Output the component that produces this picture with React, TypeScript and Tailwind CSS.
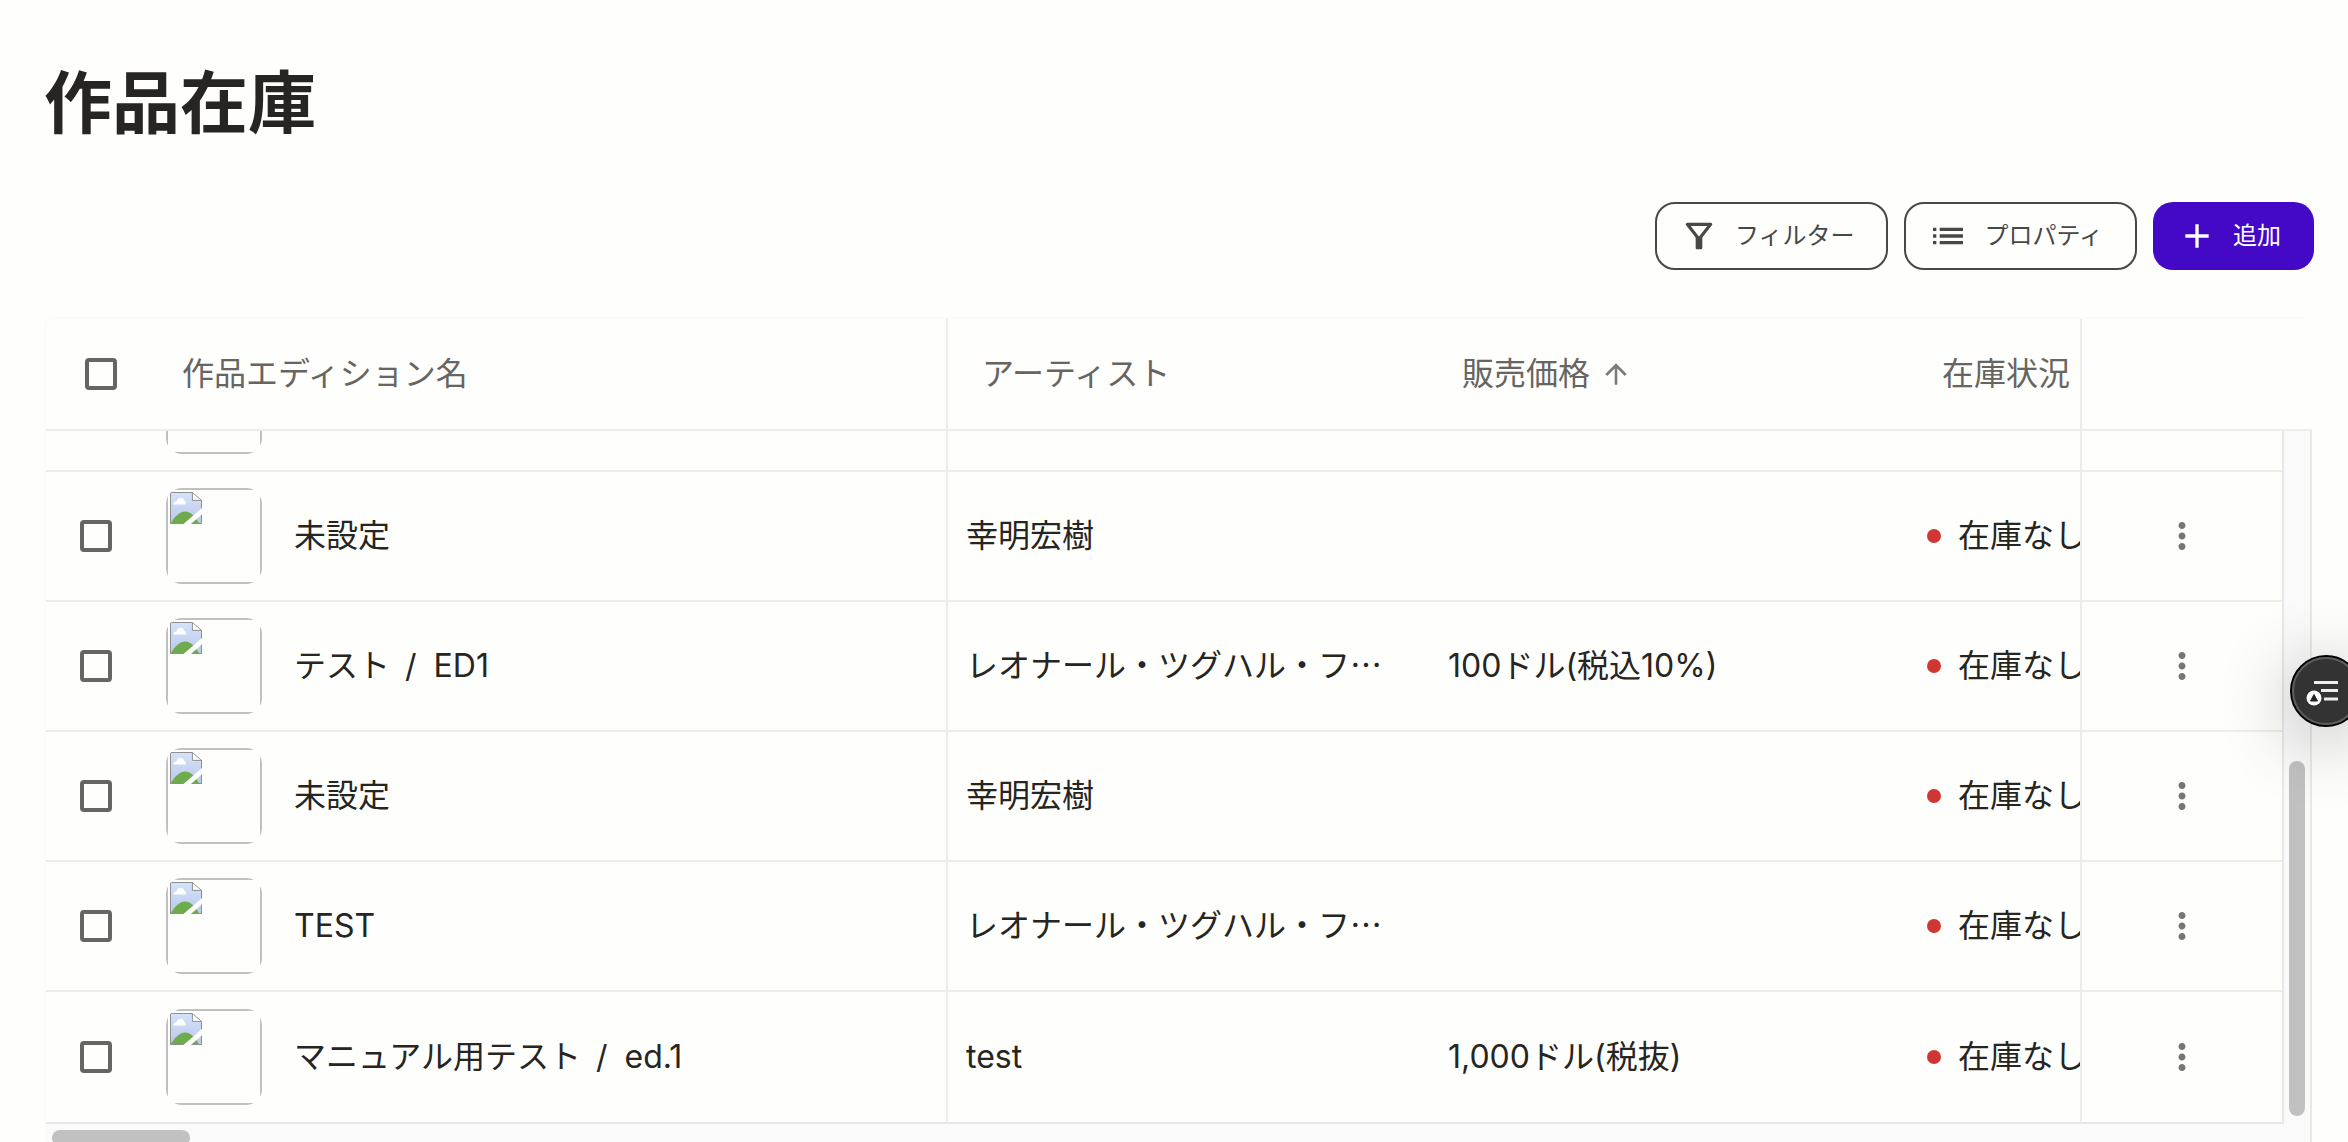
import { useState } from "react";
import {
    MdAdd,
    MdArrowUpward,
    MdList,
    MdMoreVert,
    MdOutlineFilterAlt,
} from "react-icons/md";

type Work = {
    id: number;
    title: string;
    edition?: string;
    artist: string;
    price?: string;
};

const works: Work[] = [
    { id: 1, title: "未設定", artist: "幸明宏樹" },
    { id: 2, title: "テスト", edition: "ED1", artist: "レオナール・ツグハル・フ…", price: "100ドル(税込10%)" },
    { id: 3, title: "未設定", artist: "幸明宏樹" },
    { id: 4, title: "TEST", artist: "レオナール・ツグハル・フ…" },
    { id: 5, title: "マニュアル用テスト", edition: "ed.1", artist: "test", price: "1,000ドル(税抜)" },
];

const line = "border-[#eeeee8]";

function Checkbox({ label, checked, onChange }: { label: string; checked: boolean; onChange: () => void }) {
    return (
        <input
            type="checkbox"
            aria-label={label}
            checked={checked}
            onChange={onChange}
            className="block size-8 appearance-none rounded-[4px] border-4 border-[#666562] checked:bg-[#666562]"
        />
    );
}

function BrokenImage() {
    return (
        <svg width="32" height="32" viewBox="0 0 16 16" aria-hidden="true">
            <defs>
                <linearGradient id="sky" x1="0" y1="0" x2="0" y2="1">
                    <stop offset="0" stopColor="#d6e3fb" />
                    <stop offset="1" stopColor="#b9c8ea" />
                </linearGradient>
                <clipPath id="page">
                    <path d="M0 0H11.2L16 4.2V16H0Z" />
                </clipPath>
            </defs>
            <g clipPath="url(#page)">
                <rect width="16" height="16" fill="url(#sky)" />
                <path d="M1.8 6.2C1.6 5.2 2.4 4.7 3.2 4.8C3.5 3.4 4.4 2.9 5.3 2.9C6.4 2.9 7 3.6 7.1 4.4C7.8 4.7 8.1 5.4 7.9 6.2Z" fill="#fff" />
                <path d="M0.3 15.7C2.6 12 5 9.8 7.6 9.8C10.4 9.8 12.6 12.4 14.6 15.7Z" fill="#6eab4c" />
                <path d="M0.25 0.25H11.2L15.75 4.2V15.75H0.25Z" fill="none" stroke="#8e8e8e" strokeWidth="0.5" />
                <path d="M11.2 0.2V4.2H15.8Z" fill="#fdfdfc" stroke="#8e8e8e" strokeWidth="0.5" />
                <path d="M6.5 16.2L16.2 7.8V11L10.2 16.2Z" fill="#fefefc" />
            </g>
        </svg>
    );
}

function Thumbnail() {
    return (
        <div className="size-24 shrink-0 overflow-hidden rounded-2xl">
            <div className="size-full border-2 border-[#c0c0c0] p-[2px]">
                <BrokenImage />
            </div>
        </div>
    );
}

function WorkRow({ work, checked, onToggle }: { work: Work; checked: boolean; onToggle: () => void }) {
    return (
        <tr className="h-[130px] last:h-[132px] last:[&>td]:border-b-[#e6e6e6]">
            <td className={`border-b-2 ${line}`}>
                <div className="flex justify-center">
                    <Checkbox label={`${work.title}を選択`} checked={checked} onChange={onToggle} />
                </div>
            </td>
            <td className={`border-r-2 border-b-2 pl-5 ${line}`}>
                <div className="flex items-center gap-8">
                    <Thumbnail />
                    <span>
                        {work.title}
                        {work.edition && (
                            <>
                                <span className="mr-2 ml-[6px]"> / </span>
                                {work.edition}
                            </>
                        )}
                    </span>
                </div>
            </td>
            <td className={`truncate border-b-2 pl-[18px] ${line}`}>
                {/* the ellipsis sits mid-height in the Japanese face */}
                <span
                    className={
                        work.artist.endsWith("…")
                            ? "font-['Noto_Sans_CJK_JP',sans-serif] leading-none"
                            : undefined
                    }
                >
                    {work.artist}
                </span>
            </td>
            <td className={`border-b-2 pl-[22px] ${line}`}>{work.price}</td>
            <td className={`overflow-hidden border-r-2 border-b-2 pl-[21px] whitespace-nowrap ${line}`}>
                <span className="mr-[17px] inline-block size-[14px] rounded-full bg-[#d03633] align-[4px]" />
                在庫なし
            </td>
            <td className={`border-b-2 ${line}`}>
                <button type="button" aria-label="メニュー" className="mx-auto block text-[#757575]">
                    <MdMoreVert size={42} />
                </button>
            </td>
        </tr>
    );
}

export default function App() {
    const [selected, setSelected] = useState<number[]>([]);

    const toggle = (id: number) =>
        setSelected((prev) => (prev.includes(id) ? prev.filter((n) => n !== id) : [...prev, id]));

    const allSelected = selected.length === works.length;
    const toggleAll = () => setSelected(allSelected ? [] : works.map((w) => w.id));

    return (
        <div className="relative h-screen overflow-hidden bg-[#fefefd] pt-12 font-[Inter,'Noto_Sans_CJK_JP',sans-serif] text-[32px] leading-[48px] text-[#262521]">
            <h1 className="pl-11 font-['Noto_Sans_CJK_JP',sans-serif] text-[68px] leading-[102px] font-bold">作品在庫</h1>

            {/* Toolbar */}
            <div className="mt-[52px] flex justify-end gap-4 pr-[34px] text-2xl text-[#484846]">
                <button type="button" className="flex h-[68px] items-center gap-4 rounded-[20px] border-2 border-[#484846] pr-8 pl-[22px]">
                    <MdOutlineFilterAlt size={40} />
                    フィルター
                </button>
                <button type="button" className="flex h-[68px] items-center gap-4 rounded-[20px] border-2 border-[#484846] pr-8 pl-[22px]">
                    <MdList size={40} />
                    プロパティ
                </button>
                <button type="button" className="flex h-[68px] items-center gap-4 rounded-[20px] bg-[#4409c6] pr-[33px] pl-6 text-white">
                    <MdAdd size={40} />
                    追加
                </button>
            </div>

            {/* Grid */}
            <div className="mt-[47px] mr-9 ml-11 rounded-t-lg border-t-2 border-l-2 border-[#fcfcfb]">
                <div className="flex">
                    <table className="w-full min-w-0 flex-1 table-fixed border-separate border-spacing-0 text-left">
                        <colgroup>
                            <col className="w-[100px]" />
                            <col />
                            <col className="w-[478px]" />
                            <col className="w-[480px]" />
                            <col className="w-[176px]" />
                            <col className="w-[200px]" />
                        </colgroup>
                        <thead className="text-[#666562]">
                            <tr className="h-[112px]">
                                <th className={`border-b-2 ${line}`}>
                                    <div className="flex justify-center pl-[10px]">
                                        <Checkbox label="すべて選択" checked={allSelected} onChange={toggleAll} />
                                    </div>
                                </th>
                                <th className={`border-r-2 border-b-2 pl-9 font-normal ${line}`}>作品エディション名</th>
                                <th className={`border-b-2 pl-[34px] font-normal ${line}`}>アーティスト</th>
                                <th className={`border-b-2 pl-9 font-normal ${line}`}>
                                    <div className="flex items-center gap-[10px]">
                                        販売価格
                                        <MdArrowUpward size={32} className="text-[#7c7c7a]" />
                                    </div>
                                </th>
                                <th className={`overflow-hidden border-r-2 border-b-2 pl-9 font-normal whitespace-nowrap ${line}`}>
                                    在庫状況
                                </th>
                                <td className={`border-b-2 ${line}`} />
                            </tr>
                        </thead>
                        <tbody>
                            {/* Row scrolled mostly under the header */}
                            <tr className="h-[41px]">
                                <td className={`border-b-2 ${line}`} />
                                <td className={`border-r-2 border-b-2 pl-5 ${line}`}>
                                    <div className="flex h-[39px] items-end overflow-hidden pb-4">
                                        <Thumbnail />
                                    </div>
                                </td>
                                <td className={`border-b-2 ${line}`} />
                                <td className={`border-b-2 ${line}`} />
                                <td className={`border-r-2 border-b-2 ${line}`} />
                                <td className={`border-b-2 ${line}`} />
                            </tr>
                            {works.map((work) => (
                                <WorkRow
                                    key={work.id}
                                    work={work}
                                    checked={selected.includes(work.id)}
                                    onToggle={() => toggle(work.id)}
                                />
                            ))}
                        </tbody>
                    </table>

                    {/* Vertical scrollbar */}
                    <div className="flex w-[30px] flex-col">
                        <div className={`h-[112px] border-b-2 ${line}`} />
                        <div className="flex flex-1 flex-col items-center justify-end border-x-2 border-[#e8e8e8] bg-[#fafafa] pb-[8px]">
                            <div className="h-[355px] w-4 rounded-full bg-[#c1c1c1]" />
                        </div>
                    </div>
                </div>

                {/* Horizontal scrollbar */}
                <div className="h-[30px] border-r-2 border-[#e8e8e8] bg-[#fafafa] px-[6px] pt-[6px]">
                    <div className="h-4 w-[138px] rounded-full bg-[#c1c1c1]" />
                </div>
            </div>

            {/* Floating launcher, half off the right edge */}
            <button
                type="button"
                aria-label="ガイド"
                className="absolute top-[655px] -right-[14px] size-[72px] rounded-full border-2 border-black bg-[#333] shadow-[0_12px_72px_rgba(0,0,0,0.3)]"
            >
                <svg width="68" height="68" viewBox="0 0 68 68" aria-hidden="true">
                    <circle cx="34" cy="34" r="33" fill="none" stroke="#5e5e5e" strokeWidth="2" />
                    <path d="M22 25.5H46M29 33.5H46M32 42H46" stroke="#eee" strokeWidth="3" />
                    <circle cx="22" cy="41" r="9" fill="#333" />
                    <circle cx="22" cy="41" r="7.5" fill="#fff" />
                    <path d="M22 37.5L25.5 44H18.5Z" fill="#222" stroke="#222" strokeLinejoin="round" />
                </svg>
            </button>
        </div>
    );
}
